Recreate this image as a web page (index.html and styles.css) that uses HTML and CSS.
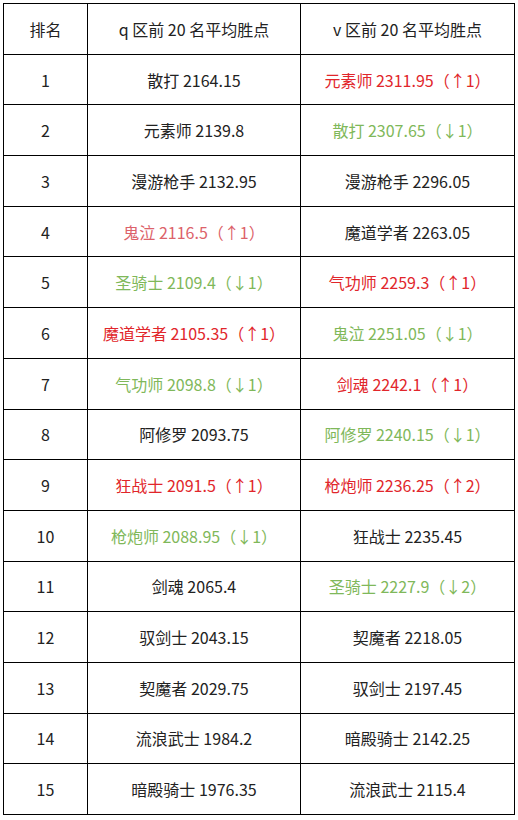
FILE: index.html
```html
<!DOCTYPE html>
<html lang="zh">
<head>
    <meta charset="UTF-8">
    <title>平均胜点</title>
    <link rel="stylesheet" href="styles.css">
</head>
<body>
    <table class="rank">
        <tr><th class="col-no">排名</th><th class="col-q">q 区前 20 名平均胜点</th><th>v 区前 20 名平均胜点</th></tr>
        <tr><td>1</td><td>散打 2164.15</td><td class="up">元素师 2311.95（↑1）</td></tr>
        <tr><td>2</td><td>元素师 2139.8</td><td class="down">散打 2307.65（↓1）</td></tr>
        <tr><td>3</td><td>漫游枪手 2132.95</td><td>漫游枪手 2296.05</td></tr>
        <tr><td>4</td><td class="up soft">鬼泣 2116.5（↑1）</td><td>魔道学者 2263.05</td></tr>
        <tr><td>5</td><td class="down">圣骑士 2109.4（↓1）</td><td class="up">气功师 2259.3（↑1）</td></tr>
        <tr><td>6</td><td class="up">魔道学者 2105.35（↑1）</td><td class="down">鬼泣 2251.05（↓1）</td></tr>
        <tr><td>7</td><td class="down">气功师 2098.8（↓1）</td><td class="up">剑魂 2242.1（↑1）</td></tr>
        <tr><td>8</td><td>阿修罗 2093.75</td><td class="down">阿修罗 2240.15（↓1）</td></tr>
        <tr><td>9</td><td class="up">狂战士 2091.5（↑1）</td><td class="up">枪炮师 2236.25（↑2）</td></tr>
        <tr><td>10</td><td class="down">枪炮师 2088.95（↓1）</td><td>狂战士 2235.45</td></tr>
        <tr><td>11</td><td>剑魂 2065.4</td><td class="down">圣骑士 2227.9（↓2）</td></tr>
        <tr><td>12</td><td>驭剑士 2043.15</td><td>契魔者 2218.05</td></tr>
        <tr><td>13</td><td>契魔者 2029.75</td><td>驭剑士 2197.45</td></tr>
        <tr><td>14</td><td>流浪武士 1984.2</td><td>暗殿骑士 2142.25</td></tr>
        <tr><td>15</td><td>暗殿骑士 1976.35</td><td>流浪武士 2115.4</td></tr>
    </table>
</body>
</html>
```

FILE: styles.css
```css
body {
    margin: 0;
    padding: 3px;
    background: #fff;
    font-family: "Noto Sans CJK SC", "Noto Sans", sans-serif;
    color: #222;
}
.rank {
    border-collapse: collapse;
    width: 512px;
    height: 812px;
    table-layout: fixed;
}
.rank th,
.rank td {
    border: 1px solid #000;
    text-align: center;
    font-size: 16px;
    font-weight: normal;
    padding: 0;
}
.col-no {
    width: 83px;
}
.col-q {
    width: 212px;
}
.up {
    color: #e1262b;
}
.up.soft {
    color: #dc626a;
}
.down {
    color: #7fb85a;
}
```
